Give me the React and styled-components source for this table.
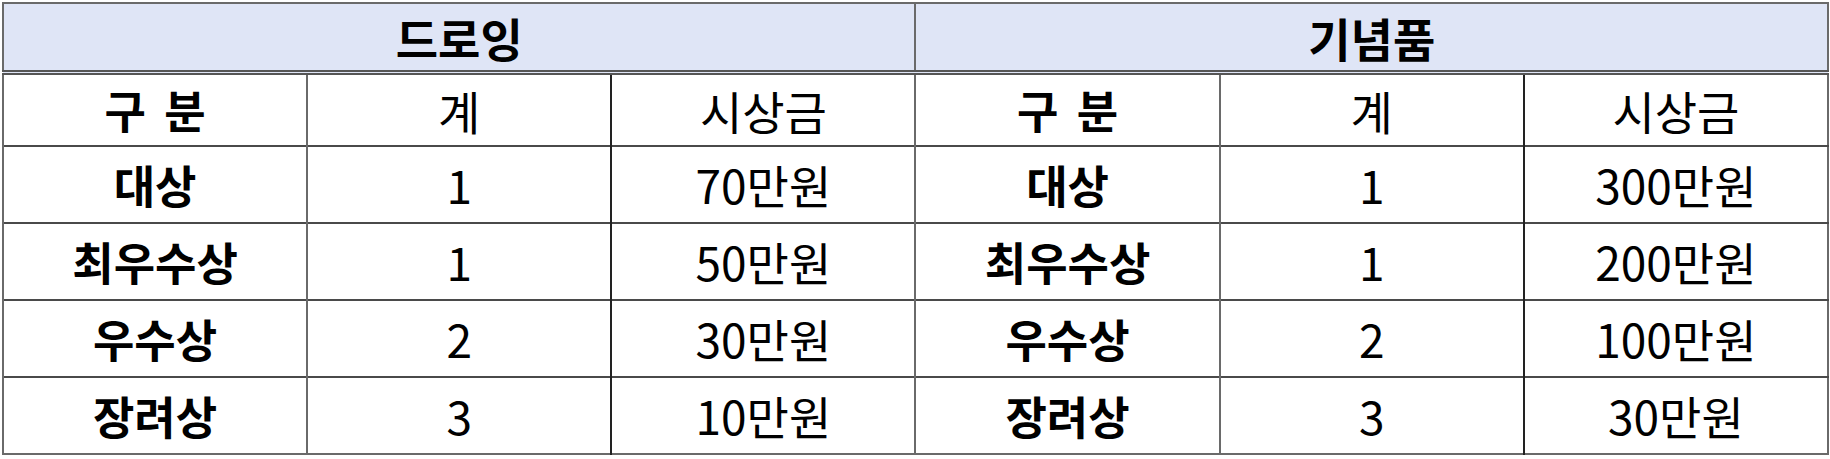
import React from "react";
import styled, { createGlobalStyle } from "styled-components";

const GlobalStyle = createGlobalStyle`
  body {
    margin: 0;
    background: #ffffff;
    font-family: "Noto Sans CJK KR", "Noto Sans", sans-serif;
  }
`;

const Wrapper = styled.div`
  padding: 2px 0 0 2px;
`;

const Table = styled.table`
  width: 1827px;
  border-collapse: collapse;
  table-layout: fixed;
  border: 2px solid #6a6a6a;
  color: #000;
`;

const HeadCell = styled.th`
  height: 66px;
  padding: 0;
  background: #dfe5f6;
  font-size: 46px;
  font-weight: 700;
  text-align: center;
  vertical-align: middle;
  border-left: 2px solid #6a6a6a;
  border-bottom: 5px double #555;
  line-height: 1;
`;

const Row = styled.tr`
  height: ${(p) => p.$h}px;
`;

const Cell = styled.td`
  padding: 0;
  text-align: center;
  vertical-align: middle;
  font-size: ${(p) => (p.$bold ? 45 : 46)}px;
  line-height: 1;
  font-weight: ${(p) => (p.$bold ? 700 : 400)};
  word-spacing: ${(p) => (p.$spread ? "8px" : "normal")};
  border-top: 2px solid #4a4a4a;
  border-left: 2px solid ${(p) => (p.$dark ? "#222" : "#6a6a6a")};
`;

const sections = [
  {
    title: "드로잉",
    rows: [
      ["대상", "1", "70만원"],
      ["최우수상", "1", "50만원"],
      ["우수상", "2", "30만원"],
      ["장려상", "3", "10만원"],
    ],
  },
  {
    title: "기념품",
    rows: [
      ["대상", "1", "300만원"],
      ["최우수상", "1", "200만원"],
      ["우수상", "2", "100만원"],
      ["장려상", "3", "30만원"],
    ],
  },
];

const Group = ({ row }) => (
  <>
    <Cell $bold>{row[0]}</Cell>
    <Cell>{row[1]}</Cell>
    <Cell $dark>{row[2]}</Cell>
  </>
);

export default function App() {
  const [a, b] = sections;
  return (
    <Wrapper>
      <GlobalStyle />
      <Table>
        <thead>
          <tr>
            <HeadCell colSpan={3}>{a.title}</HeadCell>
            <HeadCell colSpan={3}>{b.title}</HeadCell>
          </tr>
        </thead>
        <tbody>
          <Row $h={73}>
            <Cell $bold $spread>구 분</Cell>
            <Cell>계</Cell>
            <Cell $dark>시상금</Cell>
            <Cell $bold $spread>구 분</Cell>
            <Cell>계</Cell>
            <Cell $dark>시상금</Cell>
          </Row>
          {a.rows.map((r, i) => (
            <Row key={i} $h={77}>
              <Group row={r} />
              <Group row={b.rows[i]} />
            </Row>
          ))}
        </tbody>
      </Table>
    </Wrapper>
  );
}
